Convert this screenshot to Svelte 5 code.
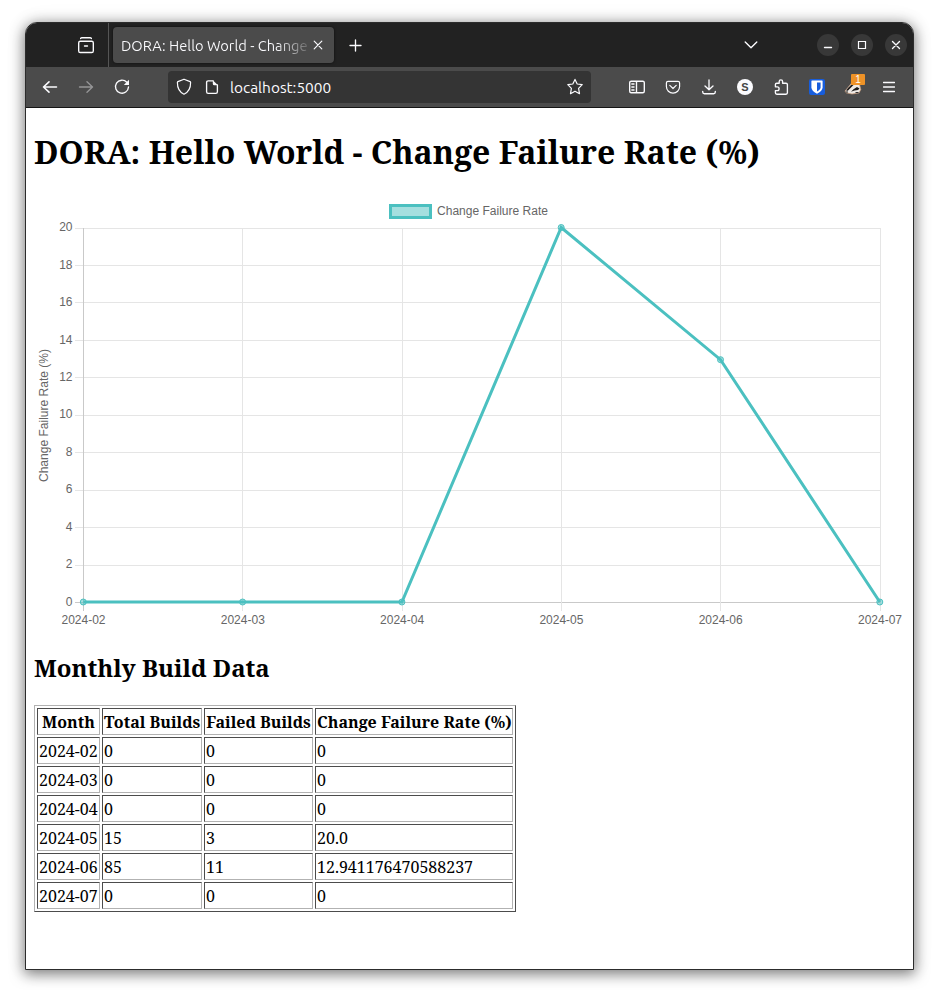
<script>
  const rows = [
    { month: '2024-02', total: '0', failed: '0', rate: '0' },
    { month: '2024-03', total: '0', failed: '0', rate: '0' },
    { month: '2024-04', total: '0', failed: '0', rate: '0' },
    { month: '2024-05', total: '15', failed: '3', rate: '20.0' },
    { month: '2024-06', total: '85', failed: '11', rate: '12.941176470588237' },
    { month: '2024-07', total: '0', failed: '0', rate: '0' }
  ];

  // Plot area inside the 871 x 436 chart
  const left = 49.5;
  const top = 34;
  const height = 374.5;
  const step = 159.3;
  const xAt = (i) => left + i * step;
  const yAt = (v) => top + height - (v / 20) * height;
  const crisp = (v) => Math.floor(v) + 0.5;
  const ticks = [20, 18, 16, 14, 12, 10, 8, 6, 4, 2, 0];
  const points = rows.map((r, i) => ({ x: xAt(i) - 0.2, y: yAt(Number(r.rate)) - 0.5 }));
  const line = points.map((p) => `${p.x},${p.y}`).join(' ');
</script>

<div class="desktop">
  <div class="window">
    <header class="tabbar">
      <div class="pinned">
        <svg width="16" height="18" viewBox="0 0 16 18" class="ico"><path d="M2.6 1.6Q3 .7 4 .7H12Q13 .7 13.4 1.6M2.3 4.2H13.7Q15.3 4.2 15.3 5.8V13.9Q15.3 15.5 13.7 15.5H2.3Q.7 15.5 .7 13.9V5.8Q.7 4.2 2.3 4.2ZM6.5 9H9.5" /></svg>
      </div>
      <div class="tab">
        <span class="tabname">DORA: Hello World - Change</span>
        <svg width="10" height="10" viewBox="0 0 10 10" class="ico thin"><path d="M1.2 1.2 8.8 8.8M8.8 1.2 1.2 8.8" /></svg>
      </div>
      <svg width="13" height="13" viewBox="0 0 13 13" class="ico plus"><path d="M6.5 1V12M1 6.5H12" /></svg>
      <div class="grow"></div>
      <svg width="14" height="8" viewBox="0 0 14 8" class="ico chevron"><path d="M1.2 1 7 6.8 12.8 1" /></svg>
      <div class="controls">
        <span><svg width="12" height="12" viewBox="0 0 12 12" class="ico"><path d="M2.5 8.5H9.5" /></svg></span>
        <span><svg width="12" height="12" viewBox="0 0 12 12" class="ico square"><path d="M2.5 2.5H9.5V9.5H2.5Z" /></svg></span>
        <span><svg width="12" height="12" viewBox="0 0 12 12" class="ico"><path d="M2.5 2.5 9.5 9.5M9.5 2.5 2.5 9.5" /></svg></span>
      </div>
    </header>

    <nav class="toolbar">
      <div class="slots">
        <span><svg width="16" height="16" viewBox="0 0 16 16" class="ico bold"><path d="M14.5 8H1.5M7 2.8 1.5 8 7 13.2" /></svg></span>
        <span class="dim"><svg width="16" height="16" viewBox="0 0 16 16" class="ico"><path d="M1.5 8H14.5M9 2.8 14.5 8 9 13.2" /></svg></span>
        <span><svg width="16" height="16" viewBox="0 0 16 16" class="ico"><path d="M12.8 3.3A6.5 6.5 0 1 0 14.5 8" /><path d="M15 .8V6H9.8Z" fill="#fbfbfe" stroke="none" /></svg></span>
      </div>
      <div class="urlbar">
        <svg width="16" height="18" viewBox="0 0 16 18" class="ico thin"><path d="M8 1.2 14.1 3.6Q14.6 3.8 14.6 4.4C14.7 9.6 12.8 13.8 8 16.2 3.2 13.8 1.3 9.6 1.4 4.4Q1.4 3.8 1.9 3.6Z" /></svg>
        <svg width="14" height="16" viewBox="0 0 14 16" class="ico page"><path d="M8.2 1.9H3.2Q1.6 1.9 1.6 3.4V12.8Q1.6 14.4 3.2 14.4H10.8Q12.4 14.4 12.4 12.8V6" /><path d="M7.8 1.2V4.7Q7.8 6.2 9.3 6.2H13Z" fill="#fbfbfe" stroke="none" /></svg>
        <span class="address">localhost:5000</span>
        <svg width="18" height="18" viewBox="0 0 18 18" class="ico thin"><path d="M9 1.4 11.2 6 16.2 6.7 12.6 10.3 13.5 15.7 9 13.2 4.5 15.7 5.4 10.3 1.8 6.7 6.8 6Z" /></svg>
      </div>
      <div class="slots extensions">
        <span><svg width="16" height="14" viewBox="0 0 16 14" class="ico"><path d="M2.2 1.2H13.8Q15.3 1.2 15.3 2.6V11.2Q15.3 12.7 13.8 12.7H2.2Q.7 12.7 .7 11.2V2.6Q.7 1.2 2.2 1.2ZM7.5 1.2V12.7M2.8 4H5M2.8 7H5M2.8 10H5" /></svg></span>
        <span><svg width="16" height="16" viewBox="0 0 16 16" class="ico thin"><path d="M3 2.4H13Q14.6 2.4 14.6 4V7.6A6.6 6.6 0 0 1 1.4 7.6V4Q1.4 2.4 3 2.4ZM4.8 6.4 8 9.5 11.2 6.4" /></svg></span>
        <span><svg width="16" height="17" viewBox="0 0 16 17" class="ico"><path d="M8 1V10.6M4 7 8 10.8 12 7M1.7 12.3V13Q1.7 14.7 3.4 14.7H12.6Q14.3 14.7 14.3 13V12.3" /></svg></span>
        <span><b class="disc">S</b></span>
        <span><svg width="16" height="18" viewBox="0 0 16 18" class="ico"><path d="M2.4 8.4V6.6Q2.4 5.2 3.8 5.2H6.2V3.6A1.7 1.7 0 0 1 9.6 3.6V5.2H13Q14.4 5.2 14.4 6.6V14.8Q14.4 16.2 13 16.2H3.8Q2.4 16.2 2.4 14.8V12.6H4.2A1.9 1.9 0 0 0 4.2 8.8H2.4" /></svg></span>
        <span><svg width="16" height="16" viewBox="0 0 16 16"><rect width="16" height="16" rx="2" fill="#175ddc" /><path d="M2.4 2Q2.4 1.4 3 1.4H13Q13.6 1.4 13.6 2V8.3Q13.6 12.2 8 14.8 2.4 12.2 2.4 8.3Z" fill="#fff" /><path d="M8 3.4H11.6V8.3Q11.6 10.7 8 12.6Z" fill="#175ddc" /></svg></span>
        <span class="badger">
          <svg width="18" height="16" viewBox="0 0 18 16"><path d="M1 12 4 8.5 8 3.5 12 2 15 3 16.8 10.5 15 14 8 15 2 13.8Z" fill="#eee9e4" stroke="#c99a78" stroke-width=".7" /><path d="M2 11.5 4.5 8.5 7.5 5.5 10 5.5 6.5 9 3.8 11.8ZM7 12.8 9.5 10.2 13 8 15.5 9.5 14 11 10.5 11.6Z" fill="#1c1a1a" /><path d="M1.5 13H4M11.5 13.6H14.5" stroke="#222" /></svg>
          <i class="count">1</i>
        </span>
        <span><svg width="12" height="12" viewBox="0 0 12 12" class="ico"><path d="M.5 1.5H11.5M.5 6H11.5M.5 10.5H11.5" /></svg></span>
      </div>
    </nav>

    <main class="page-body">
      <h1>DORA: Hello World - Change Failure Rate (%)</h1>
      <svg class="chart" width="871" height="436" viewBox="0 0 871 436">
        <rect x="356.5" y="11.5" width="40" height="12" fill="#a5dfdf" stroke="#4bc0c0" stroke-width="3" />
        <text x="403" y="21" textLength="111" lengthAdjust="spacingAndGlyphs">Change Failure Rate</text>
        {#each ticks as t}
          <path d={`M41 ${crisp(yAt(t))}H847`} stroke={t === 0 ? '#c9c9c9' : '#e5e5e5'} />
          <text x="38.5" y={yAt(t) + 3.2} text-anchor="end">{t}</text>
        {/each}
        {#each rows as r, i}
          <path d={`M${crisp(xAt(i))} 34V417`} stroke={i === 0 ? '#c9c9c9' : '#e5e5e5'} />
          <text x={xAt(i)} y="430" text-anchor="middle">{r.month}</text>
        {/each}
        <text transform="translate(14 221.5) rotate(-90)" text-anchor="middle" textLength="133" lengthAdjust="spacingAndGlyphs">Change Failure Rate (%)</text>
        <polyline points={line} fill="none" stroke="#4bc0c0" stroke-width="3" stroke-linejoin="miter" />
        {#each points as p}
          <circle cx={p.x} cy={p.y} r="3" fill="#4bc0c0" fill-opacity=".5" stroke="#4bc0c0" />
        {/each}
      </svg>
      <h2>Monthly Build Data</h2>
      <table>
        <thead>
          <tr>
            <th class="c1">Month</th>
            <th class="c2">Total Builds</th>
            <th class="c3">Failed Builds</th>
            <th class="c4">Change Failure Rate (%)</th>
          </tr>
        </thead>
        <tbody>
          {#each rows as r}
            <tr><td>{r.month}</td><td>{r.total}</td><td>{r.failed}</td><td>{r.rate}</td></tr>
          {/each}
        </tbody>
      </table>
    </main>
  </div>
</div>

<style>
  :global(body) { margin: 0; background: #fff; }
  .desktop { box-sizing: border-box; width: 939px; height: 998px; padding: 22px 25px 28px; overflow: hidden; }
  .window {
    box-sizing: border-box; width: 889px; height: 948px; border: 1px solid #2c2c2c; border-radius: 12px 12px 0 0;
    background: #fff; overflow: hidden; display: flex; flex-direction: column;
    box-shadow: 0 3px 14px 1px rgba(0, 0, 0, .5), 0 0 24px rgba(0, 0, 0, .06);
  }
  svg { display: block; flex: none; }
  .ico { fill: none; stroke: #fbfbfe; stroke-width: 1.35; stroke-linecap: round; stroke-linejoin: round; }
  .thin { stroke-width: 1.2; }
  .bold { stroke-width: 1.6; }
  .square { stroke-width: 1.2; stroke-linejoin: miter; }
  .dim { opacity: .42; }
  .grow { flex: 1; }

  .tabbar { height: 44px; flex: none; background: #222; display: flex; align-items: center; font-family: Ubuntu, "Noto Sans", sans-serif; }
  .pinned { box-sizing: border-box; width: 83px; height: 44px; border-right: 1px solid #555; padding: 14px 0 0 52px; }
  .tab {
    box-sizing: border-box; width: 221px; height: 36px; margin-left: 4px; padding: 0 11px 0 8px; border-radius: 4px;
    background: #4b4b4b; box-shadow: 0 0 3px rgba(0, 0, 0, .6); display: flex; align-items: center; justify-content: space-between;
  }
  .tabname {
    font-size: 14.67px; line-height: 20px; padding-top: 1px; white-space: nowrap; overflow: hidden; width: 187px;
    color: transparent; background: linear-gradient(90deg, #fbfbfe 155px, #686868 187px); background-clip: text; -webkit-background-clip: text;
  }
  .plus { margin-left: 15px; }
  .chevron { margin-right: 59px; }
  .controls { display: flex; gap: 12px; margin-right: 6px; }
  .controls span { width: 22px; height: 22px; border-radius: 50%; background: #383838; display: flex; align-items: center; justify-content: center; }

  .toolbar { box-sizing: border-box; height: 41px; flex: none; background: #4b4b4b; border-bottom: 1px solid #151515; display: flex; align-items: center; padding: 0 6px; }
  .slots { display: flex; }
  .slots > span { width: 36px; height: 36px; display: flex; align-items: center; justify-content: center; }
  .urlbar { box-sizing: border-box; width: 423px; height: 32px; margin-left: 28px; padding: 0 7px 0 8px; border-radius: 4px; background: #343434; display: flex; align-items: center; }
  .page { margin-left: 13px; }
  .address { flex: 1; margin-left: 11px; padding-top: 1px; color: #fbfbfe; font: 15.4px/20px Ubuntu, "Noto Sans", sans-serif; }
  .extensions { margin-left: 28px; }
  .disc { width: 16px; height: 16px; border-radius: 50%; background: #fbfbfe; color: #444; font: bold 11px/16px "Liberation Sans", sans-serif; text-align: center; }
  .badger { position: relative; }
  .count { position: absolute; left: 16px; top: 5px; width: 14px; height: 11px; border-radius: 1px; background: #ee9227; color: #fff; font: normal 10px/11px "Liberation Sans", sans-serif; text-align: center; }

  .page-body { padding: 22px 8px 0; color: #000; font-family: "Noto Serif", "DejaVu Serif Condensed", "DejaVu Serif", serif; }
  h1, h2 { margin: 0; font-weight: bold; white-space: nowrap; }
  h1 { font-size: 32px; line-height: 44px; height: 64px; }
  h2 { font-size: 24px; line-height: 33px; height: 54px; margin-top: 21px; }
  .chart text { font-family: "Liberation Sans", Arial, sans-serif; font-size: 12px; fill: #666; }
  table { table-layout: fixed; width: 482px; border: 1px solid; border-color: #b2b2b2 #4c4c4c #4c4c4c #b2b2b2; border-collapse: separate; border-spacing: 2px; font-size: 16px; line-height: 22px; }
  th, td { box-sizing: border-box; height: 27px; padding: 2px 1px 1px; border: 1px solid; border-color: #4c4c4c #b2b2b2 #b2b2b2 #4c4c4c; white-space: nowrap; }
  td { text-align: left; }
  th { text-align: center; }
  .c1 { width: 63px; }
  .c2 { width: 100px; }
  .c3 { width: 109px; }
  .c4 { width: 198px; }
</style>
